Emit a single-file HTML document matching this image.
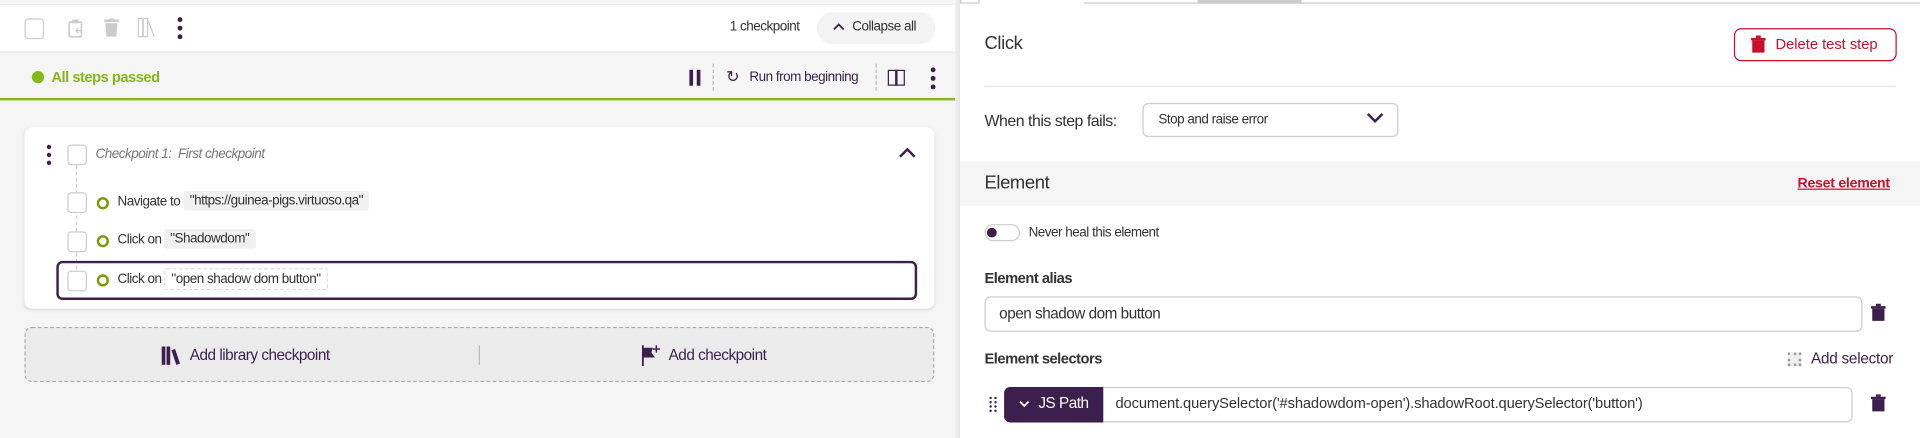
<!DOCTYPE html>
<html><head><meta charset="utf-8"><style>
*{box-sizing:border-box;margin:0;padding:0}
html,body{width:1920px;height:438px;overflow:hidden;background:#f5f5f5}
#w{position:absolute;left:0;top:0;width:1568px;height:358px;transform:scale(1.22449);transform-origin:0 0;font-family:"Liberation Sans",sans-serif;color:#333;font-size:12px}
.a{position:absolute}
.cb{position:absolute;width:15px;height:15px;border:1px solid #ccc;border-radius:3px;background:#fff}
.ring{position:absolute;width:10px;height:10px;border:2.5px solid #7a9a01;border-radius:50%}
.tag{position:absolute;background:#f0f0f0;padding:2px 5px;border-radius:2px;font-size:11px;letter-spacing:-.4px}
.t{position:absolute;white-space:nowrap;letter-spacing:-.3px}
.s{font-size:11px;letter-spacing:-.4px}
.pu{color:#3d1f4e}
</style></head><body><div id="w">
<!-- left top bar -->
<div class="a" style="left:0;top:3px;width:780px;height:40px;background:#fff;border-bottom:1px solid #e5e5e5;border-top:1px solid #eee"></div>
<div class="cb" style="left:20px;top:15px;width:16px;height:17px"></div>
<svg class="a" style="left:55px;top:15px" width="14" height="16"><rect x="1.5" y="3" width="10" height="12" rx="1" fill="none" stroke="#ccc" stroke-width="1.4"/><rect x="4" y="1" width="5" height="3" fill="#ccc"/><path d="M12 10H7m2-2l-2 2 2 2" stroke="#ccc" fill="none"/></svg>
<svg class="a" style="left:85px;top:15px" width="12" height="15"><rect x="0" y="1" width="12" height="2" fill="#ccc"/><rect x="4" y="0" width="4" height="2" fill="#ccc"/><path d="M1 4h10l-1 11H2z" fill="#ccc"/></svg>
<svg class="a" style="left:112px;top:14px" width="16" height="17"><g fill="none" stroke="#ccc"><rect x="1" y="1" width="3.5" height="15"/><rect x="5" y="1" width="3.5" height="15"/><path d="M9 3l5 13"/></g></svg>
<svg class="a" style="left:145px;top:14px" width="4" height="18"><circle cx="2" cy="2" r="2" fill="#3d1f4e"/><circle cx="2" cy="9" r="2" fill="#3d1f4e"/><circle cx="2" cy="16" r="2" fill="#3d1f4e"/></svg>
<div class="t s" style="left:596px;top:16px;color:#333">1 checkpoint</div>
<div class="a" style="left:667px;top:10px;width:97px;height:26px;background:#f3f3f3;border-radius:13px"></div>
<svg class="a" style="left:680px;top:18px" width="10" height="7"><path d="M1 6l4-4 4 4" stroke="#3d1f4e" stroke-width="1.5" fill="none"/></svg>
<div class="t s" style="left:696px;top:16px">Collapse all</div>
<!-- status bar -->
<div class="a" style="left:0;top:80px;width:780px;height:2px;background:#86b817"></div>
<div class="a" style="left:26px;top:58px;width:10px;height:10px;border-radius:50%;background:#86b817"></div>
<div class="t" style="left:42px;top:56px;color:#86b817;font-size:12px;font-weight:bold;letter-spacing:-.4px">All steps passed</div>
<div class="a" style="left:563px;top:57px;width:3px;height:13px;background:#3d1f4e"></div>
<div class="a" style="left:569px;top:57px;width:3px;height:13px;background:#3d1f4e"></div>
<div class="a" style="left:582px;top:52px;height:22px;border-left:1px dashed #bbb"></div>
<div class="t pu" style="left:593px;top:55px;font-size:13px">&#x21bb;</div>
<div class="t s" style="left:612px;top:57px;color:#3d1f4e">Run from beginning</div>
<div class="a" style="left:715px;top:52px;height:22px;border-left:1px dashed #bbb"></div>
<div class="a" style="left:725px;top:57px;width:14px;height:13px;border:1.5px solid #3d1f4e"></div>
<div class="a" style="left:731px;top:57px;width:1.5px;height:13px;background:#3d1f4e"></div>
<svg class="a" style="left:760px;top:55px" width="4" height="18"><circle cx="2" cy="2" r="2" fill="#3d1f4e"/><circle cx="2" cy="9" r="2" fill="#3d1f4e"/><circle cx="2" cy="16" r="2" fill="#3d1f4e"/></svg>
<!-- card -->
<div class="a" style="left:20px;top:104px;width:743px;height:148px;background:#fff;border-radius:6px;box-shadow:0 1px 3px rgba(0,0,0,.12)"></div>
<svg class="a" style="left:38px;top:118px" width="4" height="17"><circle cx="2" cy="2" r="1.8" fill="#3d1f4e"/><circle cx="2" cy="8.5" r="1.8" fill="#3d1f4e"/><circle cx="2" cy="15" r="1.8" fill="#3d1f4e"/></svg>
<div class="cb" style="left:55px;top:118px;width:16px;height:17px"></div>
<div class="t s" style="left:78px;top:120px;font-style:italic;color:#777">Checkpoint 1:&nbsp; First checkpoint</div>
<svg class="a" style="left:734px;top:120px" width="14" height="10"><path d="M1 8l6-6 6 6" stroke="#3d1f4e" stroke-width="2" fill="none"/></svg>
<div class="a" style="left:62px;top:135px;height:95px;border-left:1px dashed #ccc"></div>
<div class="cb" style="left:55px;top:157px;width:16px;height:17px"></div>
<div class="ring" style="left:79px;top:161px"></div>
<div class="t s" style="left:96px;top:159px">Navigate to</div>
<div class="tag" style="left:150px;top:156px">"https://guinea-pigs.virtuoso.qa"</div>
<div class="cb" style="left:55px;top:189px;width:16px;height:17px"></div>
<div class="ring" style="left:79px;top:192px"></div>
<div class="t s" style="left:96px;top:190px">Click on</div>
<div class="tag" style="left:134px;top:187px">"Shadowdom"</div>
<div class="a" style="left:46px;top:213px;width:703px;height:32px;border:2px solid #3d1f4e;border-radius:5px"></div>
<div class="cb" style="left:55px;top:221px;width:16px;height:17px"></div>
<div class="ring" style="left:79px;top:224px"></div>
<div class="t s" style="left:96px;top:222px">Click on</div>
<div class="tag" style="left:134px;top:219px;background:#fff;border:1px dashed #ddd">"open shadow dom button"</div>
<!-- add area -->
<div class="a" style="left:20px;top:267px;width:743px;height:45px;background:#ebebeb;border:1.5px dashed #aaa;border-radius:6px"></div>
<div class="a" style="left:391px;top:282px;height:16px;border-left:1px solid #bbb"></div>
<svg class="a" style="left:132px;top:282px" width="16" height="16"><g fill="#3d1f4e"><rect x="0" y="1" width="3" height="15"/><rect x="4" y="1" width="3" height="15"/><path d="M8 4l3-1 4 12-3 1z"/></g></svg>
<div class="t pu" style="left:155px;top:283px;font-size:12.5px;letter-spacing:-.4px">Add library checkpoint</div>
<svg class="a" style="left:524px;top:281px" width="16" height="18"><path d="M1 1v17" stroke="#3d1f4e" stroke-width="1.5"/><path d="M1 3h8l-1 4 3 4H1z" fill="#3d1f4e"/><path d="M12 1v6M9 4h6" stroke="#3d1f4e" stroke-width="1.2"/></svg>
<div class="t pu" style="left:546px;top:283px;font-size:12.5px;letter-spacing:-.4px">Add checkpoint</div>
<!-- right panel -->
<div class="a" style="left:780px;top:0;width:6px;height:358px;background:linear-gradient(90deg,#f0f0f0,#e0e0e0)"></div>
<div class="a" style="left:784px;top:0;width:784px;height:358px;background:#fff"></div>
<div class="a" style="left:784px;top:0;width:16px;height:3px;border:1px solid #ccc;border-top:none"></div>
<div class="a" style="left:885px;top:0;width:683px;height:3px;border-bottom:1px solid #ccc"></div>
<div class="a" style="left:978px;top:0;width:85px;height:3px;background:#ccc"></div>
<div class="t" style="left:804px;top:27px;font-size:15px;color:#333">Click</div>
<div class="a" style="left:1416px;top:23px;width:133px;height:27px;border:1px solid #c8102e;border-radius:6px"></div>
<svg class="a" style="left:1430px;top:29px" width="12" height="15"><rect x="0" y="2" width="12" height="2" fill="#c8102e"/><rect x="4" y="0" width="4" height="2" fill="#c8102e"/><path d="M1 4h10v10H1z" fill="#c8102e"/></svg>
<div class="t" style="left:1450px;top:29px;font-size:12px;color:#c8102e;letter-spacing:0">Delete test step</div>
<div class="a" style="left:804px;top:70px;width:744px;height:1px;background:#e6e6e6"></div>
<div class="t" style="left:804px;top:91px;font-size:13px;letter-spacing:-.4px">When this step fails:</div>
<div class="a" style="left:933px;top:84px;width:209px;height:28px;border:1px solid #ccc;border-radius:5px"></div>
<div class="t s" style="left:946px;top:92px">Stop and raise error</div>
<svg class="a" style="left:1116px;top:92px" width="14" height="9"><path d="M1 1l6 6 6-6" stroke="#3d1f4e" stroke-width="2" fill="none"/></svg>
<div class="a" style="left:784px;top:132px;width:784px;height:36px;background:#f5f5f5"></div>
<div class="t" style="left:804px;top:141px;font-size:15px">Element</div>
<div class="t" style="left:1468px;top:144px;font-size:11.5px;font-weight:bold;color:#c8102e;text-decoration:underline;letter-spacing:-.2px">Reset element</div>
<div class="a" style="left:804px;top:183px;width:29px;height:14px;border:1px solid #ccc;border-radius:7px"></div>
<div class="a" style="left:806px;top:186px;width:8px;height:8px;border-radius:50%;background:#3d1f4e"></div>
<div class="t s" style="left:840px;top:184px">Never heal this element</div>
<div class="t" style="left:804px;top:220px;font-size:12px;font-weight:bold;letter-spacing:-.4px">Element alias</div>
<div class="a" style="left:804px;top:242px;width:717px;height:29px;border:1px solid #ccc;border-radius:5px"></div>
<div class="t" style="left:816px;top:249px;font-size:12.5px;letter-spacing:-.4px">open shadow dom button</div>
<svg class="a" style="left:1528px;top:248px" width="12" height="15"><rect x="0" y="2" width="12" height="2" fill="#3d1f4e"/><rect x="4" y="0" width="4" height="2" fill="#3d1f4e"/><path d="M1 4h10v10H1z" fill="#3d1f4e"/></svg>
<div class="t" style="left:804px;top:286px;font-size:12px;font-weight:bold;letter-spacing:-.4px">Element selectors</div>
<div class="t pu" style="left:1479px;top:286px;font-size:12.5px;letter-spacing:-.2px">Add selector</div>
<div class="a" style="left:1460px;top:288px;width:11px;height:11px;border:2px dotted #999;background:#eee"></div>
<svg class="a" style="left:807px;top:323px" width="8" height="14"><g fill="#3d1f4e"><circle cx="2" cy="2" r="1"/><circle cx="6" cy="2" r="1"/><circle cx="2" cy="5.5" r="1"/><circle cx="6" cy="5.5" r="1"/><circle cx="2" cy="9" r="1"/><circle cx="6" cy="9" r="1"/><circle cx="2" cy="12.5" r="1"/><circle cx="6" cy="12.5" r="1"/></g></svg>
<div class="a" style="left:900px;top:316px;width:613px;height:29px;border:1px solid #ccc;border-radius:0 5px 5px 0"></div>
<div class="a" style="left:820px;top:316px;width:81px;height:29px;background:#3d1f4e;border-radius:5px 0 0 5px"></div>
<svg class="a" style="left:832px;top:327px" width="9" height="6"><path d="M1 1l3.5 3.5L8 1" stroke="#fff" stroke-width="1.5" fill="none"/></svg>
<div class="t" style="left:848px;top:322px;font-size:12.5px;color:#fff;letter-spacing:-.4px">JS Path</div>
<div class="t" style="left:911px;top:322px;font-size:12px;letter-spacing:-.1px">document.querySelector('#shadowdom-open').shadowRoot.querySelector('button')</div>
<svg class="a" style="left:1528px;top:322px" width="12" height="15"><rect x="0" y="2" width="12" height="2" fill="#3d1f4e"/><rect x="4" y="0" width="4" height="2" fill="#3d1f4e"/><path d="M1 4h10v10H1z" fill="#3d1f4e"/></svg>
</div></body></html>
